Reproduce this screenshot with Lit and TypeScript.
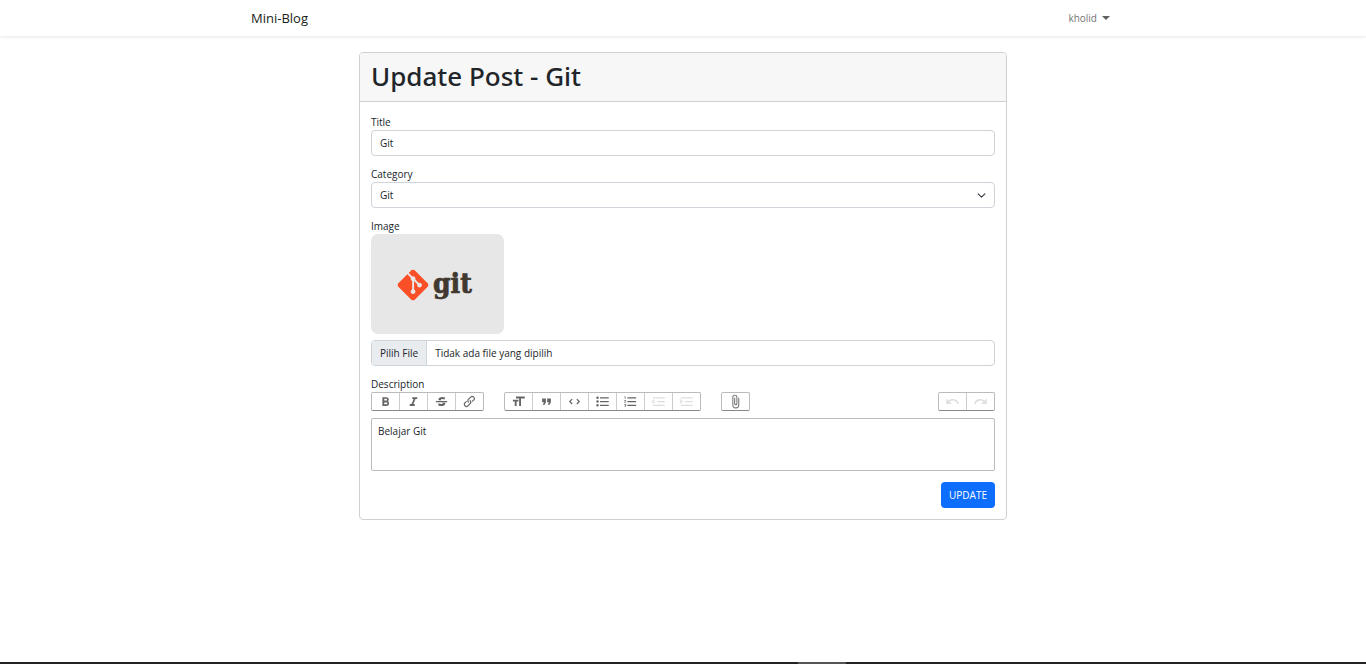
import { LitElement, html, css, svg } from "lit";
import { customElement, property } from "lit/decorators.js";

interface Tool {
  name: string;
  path: string;
  disabled?: boolean;
}

const TEXT_TOOLS: Tool[] = [
  { name: "Bold", path: "M15.6 11.8c1-.7 1.6-1.8 1.6-2.8a4 4 0 0 0-4-4H7v14h7c2.1 0 3.7-1.7 3.7-3.8 0-1.5-.8-2.8-2.1-3.4zM10 7.5h3a1.5 1.5 0 1 1 0 3h-3v-3zm3.5 9H10v-3h3.5a1.5 1.5 0 1 1 0 3z" },
  { name: "Italic", path: "M10 5v3h2.2l-3.4 8H6v3h8v-3h-2.2l3.4-8H18V5h-8z" },
  { name: "Strikethrough", path: "M12.73 14l.28.14c.26.15.45.3.57.44.12.14.18.3.18.5 0 .3-.15.56-.44.75-.3.2-.76.3-1.39.3A13.52 13.52 0 0 1 7 14.95v3.37a10.64 10.64 0 0 0 4.84.88c1.26 0 2.35-.19 3.28-.56.93-.37 1.64-.9 2.14-1.57s.74-1.45.74-2.32c0-.26-.02-.51-.06-.75h-5.21zm-5.5-4c-.08-.34-.12-.7-.12-1.1 0-1.29.52-2.3 1.58-3.02 1.05-.72 2.5-1.08 4.34-1.08 1.62 0 3.28.34 4.97 1l-1.3 2.93c-1.47-.6-2.73-.9-3.8-.9-.55 0-.96.08-1.2.26-.26.17-.38.38-.38.64 0 .27.16.52.48.74.17.12.53.3 1.05.53H7.23zM3 13h18v-2H3v2z" },
  { name: "Link", path: "M9.88 13.7a4.3 4.3 0 0 1 0-6.07l3.37-3.37a4.26 4.26 0 0 1 6.07 0 4.3 4.3 0 0 1 0 6.06l-1.96 1.72a.91.91 0 1 1-1.3-1.3l1.97-1.71a2.46 2.46 0 0 0-3.48-3.48l-3.38 3.37a2.46 2.46 0 0 0 0 3.48.91.91 0 1 1-1.3 1.3z M4.25 19.46a4.3 4.3 0 0 1 0-6.07l1.93-1.9a.91.91 0 1 1 1.3 1.3l-1.93 1.9a2.46 2.46 0 0 0 3.48 3.48l3.37-3.38c.96-.96.96-2.52 0-3.48a.91.91 0 1 1 1.3-1.3 4.3 4.3 0 0 1 0 6.07l-3.38 3.38a4.26 4.26 0 0 1-6.07 0z" },
];

const BLOCK_TOOLS: Tool[] = [
  { name: "Heading", path: "M12 9v3H9v7H6v-7H3V9h9zM8 4h14v3h-6v12h-3V7H8V4z" },
  { name: "Quote", path: "M6 17h3l2-4V7H5v6h3zm8 0h3l2-4V7h-6v6h3z" },
  { name: "Code", path: "M18.2 12L15 15.2l1.4 1.4L21 12l-4.6-4.6L15 8.8l3.2 3.2zM5.8 12L9 8.8 7.6 7.4 3 12l4.6 4.6L9 15.2 5.8 12z" },
  { name: "Bullets", path: "M4 4a2 2 0 1 0 0 4 2 2 0 0 0 0-4zm0 6a2 2 0 1 0 0 4 2 2 0 0 0 0-4zm0 6a2 2 0 1 0 0 4 2 2 0 0 0 0-4zm4 3h14v-2H8v2zm0-6h14v-2H8v2zm0-8v2h14V5H8z" },
  { name: "Numbers", path: "M2 17h2v.5H3v1h1v.5H2v1h3v-4H2v1zm1-9h1V4H2v1h1v3zm-1 3h1.8L2 13.1v.9h3v-1H3.2L5 10.9V10H2v1zm5-6v2h14V5H7zm0 14h14v-2H7v2zm0-6h14v-2H7v2z" },
  { name: "Decrease level", disabled: true, path: "M3 19h19v-2H3v2zm7-6h12v-2H10v2zm-8.3-.3l2.8 2.9L6 14.2 4 12l2-2-1.4-1.5L1 12l.7.7zM3 5v2h19V5H3z" },
  { name: "Increase level", disabled: true, path: "M3 19h19v-2H3v2zm7-6h12v-2H10v2zm-6.9-1L1 14.2l1.4 1.4L6 12l-.7-.7-2.8-2.8L1 9.9 3.1 12zM3 5v2h19V5H3z" },
];

const FILE_TOOLS: Tool[] = [
  { name: "Attach files", path: "M16.5 6v11.5a4 4 0 1 1-8 0V5a2.5 2.5 0 0 1 5 0v10.5a1 1 0 1 1-2 0V6H10v9.5a2.5 2.5 0 0 0 5 0V5a4 4 0 1 0-8 0v12.5a5.5 5.5 0 0 0 11 0V6h-1.5z" },
];

const HISTORY_TOOLS: Tool[] = [
  { name: "Undo", disabled: true, path: "M12.5 8c-2.6 0-5 1-6.9 2.6L2 7v9h9l-3.6-3.6A8 8 0 0 1 20 16l2.4-.8a10.5 10.5 0 0 0-10-7.2z" },
  { name: "Redo", disabled: true, path: "M18.4 10.6a10.5 10.5 0 0 0-16.9 4.6L4 16a8 8 0 0 1 12.7-3.6L13 16h9V7l-3.6 3.6z" },
];

@customElement("tool-group")
class ToolGroup extends LitElement {
  @property({ attribute: false }) tools: Tool[] = [];

  static styles = css`
    :host {
      display: flex;
      box-sizing: border-box;
      height: 19px;
      border: 1px solid #bbb;
      border-bottom-color: #888;
      border-radius: 2px;
    }
    .tool {
      display: flex;
      align-items: center;
      justify-content: center;
      box-sizing: border-box;
      width: 28px;
      padding: 0;
      border: 0;
      border-left: 1px solid #ccc;
      background: none;
      color: #000;
    }
    .tool:first-child {
      width: 27px;
      border-left: 0;
    }
    .icon {
      width: 15px;
      height: 15px;
      fill: currentColor;
      opacity: 0.6;
    }
    .tool:disabled .icon {
      opacity: 0.125;
    }
  `;

  render() {
    return this.tools.map(
      (t) => html`<button class="tool" type="button" aria-label=${t.name} ?disabled=${t.disabled}>
        <svg class="icon" viewBox="0 0 24 24" aria-hidden="true">${svg`<path d=${t.path}></path>`}</svg>
      </button>`
    );
  }
}

@customElement("app-root")
class AppRoot extends LitElement {
  static styles = css`
    :host {
      display: flex;
      flex-direction: column;
      min-height: 100vh;
      background: #fff;
      color: #212529;
      font-family: "Open Sans", "Noto Sans", sans-serif;
      font-size: 10px;
      line-height: 16px;
    }
    * {
      box-sizing: border-box;
    }
    .navbar {
      box-shadow: 0 1px 3px rgba(0, 0, 0, 0.1);
    }
    .nav-inner {
      display: flex;
      align-items: center;
      justify-content: space-between;
      max-width: 864px;
      height: 36px;
      margin: 0 auto;
    }
    .brand {
      color: #1a1d20;
      font-size: 13px;
      text-decoration: none;
    }
    .user {
      display: flex;
      align-items: center;
      gap: 5px;
      padding: 0 5px;
      border: 0;
      background: none;
      color: #737373;
      font: inherit;
    }
    .caret {
      border-style: solid;
      border-width: 4px 4px 0;
      border-color: #606060 transparent transparent;
    }
    .main {
      flex: 1;
      padding: 16px 0;
    }
    .card {
      max-width: 648px;
      margin: 0 auto;
      border: 1px solid #d0d0d0;
      border-radius: 4px;
    }
    .card-header {
      padding: 4px 11px 6px;
      border-bottom: 1px solid #d0d0d0;
      border-radius: 3px 3px 0 0;
      background: #f7f7f7;
    }
    .title {
      margin: 0;
      font-family: "Noto Sans", "Open Sans", sans-serif;
      font-size: 26px;
      font-weight: 500;
      line-height: 38px;
    }
    .form {
      display: flex;
      flex-direction: column;
      gap: 10px;
      padding: 12px 11px 11px;
    }
    .label {
      display: block;
    }
    .control {
      display: block;
      width: 100%;
      height: 26px;
      padding: 0 8px;
      border: 1px solid #ced4da;
      border-radius: 4px;
      background: #fff;
      color: inherit;
      font: inherit;
    }
    .select-wrap {
      display: grid;
      align-items: center;
    }
    .select-wrap > * {
      grid-area: 1 / 1;
    }
    .select {
      appearance: none;
    }
    .chevron {
      justify-self: end;
      width: 9px;
      height: 9px;
      margin-right: 9px;
      pointer-events: none;
    }
    .preview {
      display: block;
      width: 133px;
      height: 100px;
      margin-bottom: 6px;
      border-radius: 7px;
      background: #e7e7e7;
    }
    .logo-mark {
      fill: #fb4f28;
    }
    .logo-word {
      fill: #413930;
      stroke: #413930;
      stroke-width: 0.7px;
      font-family: "DejaVu Serif Condensed", "DejaVu Serif", serif;
      font-size: 28px;
      font-weight: 700;
    }
    .file {
      position: relative;
      display: flex;
      align-items: stretch;
      padding: 0;
      overflow: hidden;
      line-height: 24px;
    }
    .file-input {
      position: absolute;
      inset: 0;
      width: 100%;
      opacity: 0;
    }
    .file-button {
      padding: 0 8px;
      border-right: 1px solid #ced4da;
      background: #e9ecef;
    }
    .file-name {
      padding: 0 8px;
    }
    .toolbar {
      display: flex;
      gap: 20px;
      margin-bottom: 7px;
    }
    .history {
      margin-left: auto;
    }
    .editor {
      display: block;
      width: 100%;
      height: 53px;
      padding: 4px 6px;
      border: 1px solid #bbb;
      border-radius: 2px;
      color: inherit;
      font: inherit;
      resize: none;
    }
    .submit {
      align-self: flex-end;
      height: 26px;
      margin-top: 1px;
      padding: 0 8px;
      border: 0;
      border-radius: 4px;
      background: #0d6efd;
      color: #fff;
      font: inherit;
    }
    .taskbar {
      display: flex;
      justify-content: center;
      height: 2px;
      background: #222;
    }
    .taskbar-active {
      width: 48px;
      margin-left: 278px;
      background: #555;
    }
  `;

  render() {
    return html`
      <nav class="navbar">
        <div class="nav-inner">
          <a class="brand" href="#">Mini-Blog</a>
          <button class="user" type="button">kholid <span class="caret"></span></button>
        </div>
      </nav>
      <main class="main">
        <section class="card">
          <header class="card-header"><h1 class="title">Update Post - Git</h1></header>
          <form class="form" @submit=${(e: Event) => e.preventDefault()}>
            <div class="field">
              <label class="label" for="title">Title</label>
              <input class="control" id="title" type="text" value="Git" />
            </div>
            <div class="field">
              <label class="label" for="category">Category</label>
              <div class="select-wrap">
                <select class="control select" id="category">
                  <option selected>Git</option>
                </select>
                <svg class="chevron" viewBox="0 0 16 16" aria-hidden="true">
                  <path d="M2 5l6 6 6-6" fill="none" stroke="#343a40" stroke-width="2" stroke-linecap="round" stroke-linejoin="round" />
                </svg>
              </div>
            </div>
            <div class="field">
              <label class="label" for="image">Image</label>
              <svg class="preview" viewBox="0 0 133 100" role="img" aria-label="git">
                <svg x="26.5" y="35.5" width="31" height="31" viewBox="0 0 24 24">
                  <path class="logo-mark" d="M23.546 10.93L13.067.452c-.604-.603-1.582-.603-2.188 0L8.708 2.627l2.76 2.76c.645-.215 1.379-.07 1.889.441.516.515.658 1.258.438 1.9l2.658 2.66c.645-.223 1.387-.078 1.9.435.721.72.721 1.884 0 2.604-.719.719-1.881.719-2.6 0-.539-.541-.674-1.337-.404-1.996L12.86 8.955v6.525c.176.086.342.203.488.348.713.721.713 1.883 0 2.6-.719.721-1.889.721-2.609 0-.719-.719-.719-1.879 0-2.598.182-.18.387-.316.605-.406V8.835c-.217-.091-.424-.222-.6-.401-.545-.545-.676-1.342-.396-2.009L7.636 3.7.45 10.881c-.6.605-.6 1.584 0 2.189l10.48 10.477c.604.604 1.582.604 2.186 0l10.43-10.43c.605-.603.605-1.582 0-2.187" />
                </svg>
                <text class="logo-word" x="62" y="59">git</text>
              </svg>
              <div class="control file">
                <span class="file-button">Pilih File</span>
                <span class="file-name">Tidak ada file yang dipilih</span>
                <input class="file-input" id="image" type="file" />
              </div>
            </div>
            <div class="field">
              <label class="label" for="description">Description</label>
              <div class="toolbar" role="toolbar" aria-label="Description">
                <tool-group .tools=${TEXT_TOOLS}></tool-group>
                <tool-group .tools=${BLOCK_TOOLS}></tool-group>
                <tool-group .tools=${FILE_TOOLS}></tool-group>
                <tool-group class="history" .tools=${HISTORY_TOOLS}></tool-group>
              </div>
              <textarea class="editor" id="description" .value=${"Belajar Git"}></textarea>
            </div>
            <button class="submit" type="submit">UPDATE</button>
          </form>
        </section>
      </main>
      <footer class="taskbar"><span class="taskbar-active"></span></footer>
    `;
  }
}
